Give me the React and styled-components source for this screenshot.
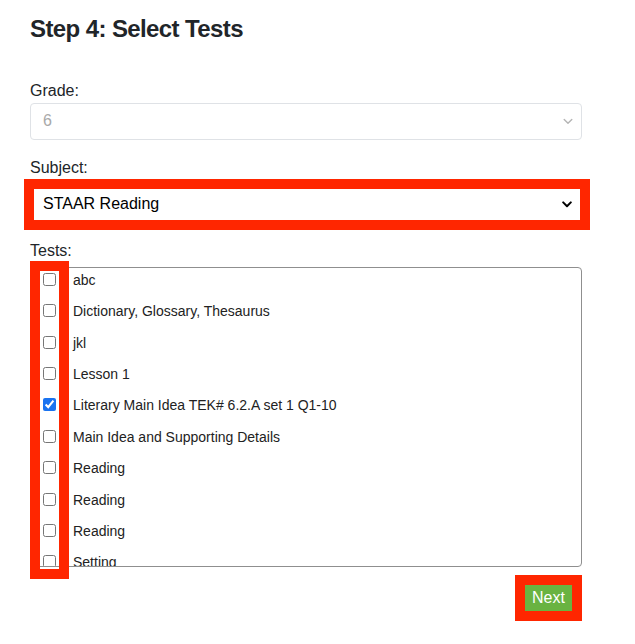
import React from "react";
import styled, { createGlobalStyle } from "styled-components";

const Global = createGlobalStyle`
  html, body { margin: 0; padding: 0; background: #fff; }
  body { font-family: "Liberation Sans", Arial, sans-serif; color: #212529; }
`;

const Page = styled.div`
  width: 552px;
  padding: 15px 0 0 30px;
`;

const Title = styled.h4`
  margin: 0 0 35px;
  font-size: 24px;
  line-height: 28.8px;
  font-weight: 700;
  letter-spacing: -0.6px;
  color: #212529;
`;

const Label = styled.div`
  font-size: 16px;
  line-height: 24px;
  color: #212529;
  margin-bottom: ${(p) => p.$mb || 0}px;
`;

const Group = styled.div`
  margin-bottom: ${(p) => p.$mb || 0}px;
`;

const chevron = (color) =>
  `url("data:image/svg+xml,%3Csvg xmlns='http://www.w3.org/2000/svg' width='10' height='7' viewBox='0 0 10 7'%3E%3Cpath d='M1.2 1.4 5 5.2 8.8 1.4' fill='none' stroke='${color}' stroke-width='${color === "%23000" ? 2 : 1.4}' stroke-linecap='round' stroke-linejoin='round'/%3E%3C/svg%3E")`;

const GradeSelect = styled.div`
  box-sizing: border-box;
  height: 37px;
  border: 1px solid #dfe2e6;
  border-radius: 4px;
  padding: 0 12px;
  display: flex;
  align-items: center;
  justify-content: space-between;
  font-size: 16px;
  color: #a9a9a9;
  background: #fff ${chevron("%23b5b5b5")} no-repeat right 8px center;
`;

const SubjectWrap = styled.div`
  padding: 0 2px 0 4px;
`;

const SubjectSelect = styled.div`
  box-sizing: border-box;
  height: 31px;
  padding: 0 9px;
  display: flex;
  align-items: center;
  font-size: 16px;
  color: #000;
  background: #fff ${chevron("%23000")} no-repeat right 8px center;
  outline: 10px solid #ff2600;
`;

const ListArea = styled.div`
  position: relative;
`;

const List = styled.div`
  box-sizing: border-box;
  height: 300px;
  border: 1px solid #8f8f8f;
  border-radius: 0 4px 4px 0;
  overflow-y: auto;
  scrollbar-width: none;
  &::-webkit-scrollbar { display: none; }
`;

const Row = styled.label`
  box-sizing: border-box;
  height: 31.4px;
  display: flex;
  align-items: flex-start;
  padding-left: 12px;
  font-size: 14px;
  line-height: 18px;
  color: #222;
`;

const Check = styled.input`
  width: 13px;
  height: 13px;
  margin: 5px 17px 0 0;
  flex: none;
  accent-color: #1a73f0;
`;

const RowText = styled.span`
  padding-top: 3px;
`;

const Highlight = styled.div`
  position: absolute;
  left: 0;
  top: -6px;
  width: 39px;
  height: 318px;
  box-sizing: border-box;
  border: 10px solid #ff2600;
  pointer-events: none;
`;

const Footer = styled.div`
  display: flex;
  justify-content: flex-end;
  padding: 18px 10px 30px 0;
`;

const NextButton = styled.button`
  box-sizing: border-box;
  height: 26px;
  width: 47px;
  padding: 0;
  border: none;
  background: #69b341;
  color: #fff;
  font-family: "Liberation Sans", Arial, sans-serif;
  font-size: 16px;
  line-height: 26px;
  outline: 10px solid #ff2600;
`;

const tests = [
  { name: "abc" },
  { name: "Dictionary, Glossary, Thesaurus" },
  { name: "jkl" },
  { name: "Lesson 1" },
  { name: "Literary Main Idea TEK# 6.2.A set 1 Q1-10", checked: true },
  { name: "Main Idea and Supporting Details" },
  { name: "Reading" },
  { name: "Reading" },
  { name: "Reading" },
  { name: "Setting" },
  { name: "Vocabulary" },
];

export default function App() {
  return (
    <>
      <Global />
      <Page>
        <Title>Step 4: Select Tests</Title>
        <Group $mb={16}>
          <Label>Grade:</Label>
          <GradeSelect>6</GradeSelect>
        </Group>
        <Group $mb={19}>
          <Label $mb={9}>Subject:</Label>
          <SubjectWrap>
            <SubjectSelect>STAAR Reading</SubjectSelect>
          </SubjectWrap>
        </Group>
        <Label $mb={4}>Tests:</Label>
        <ListArea>
          <List>
            {tests.map((t, i) => (
              <Row key={i}>
                <Check type="checkbox" defaultChecked={!!t.checked} />
                <RowText>{t.name}</RowText>
              </Row>
            ))}
          </List>
          <Highlight />
        </ListArea>
        <Footer>
          <NextButton>Next</NextButton>
        </Footer>
      </Page>
    </>
  );
}
